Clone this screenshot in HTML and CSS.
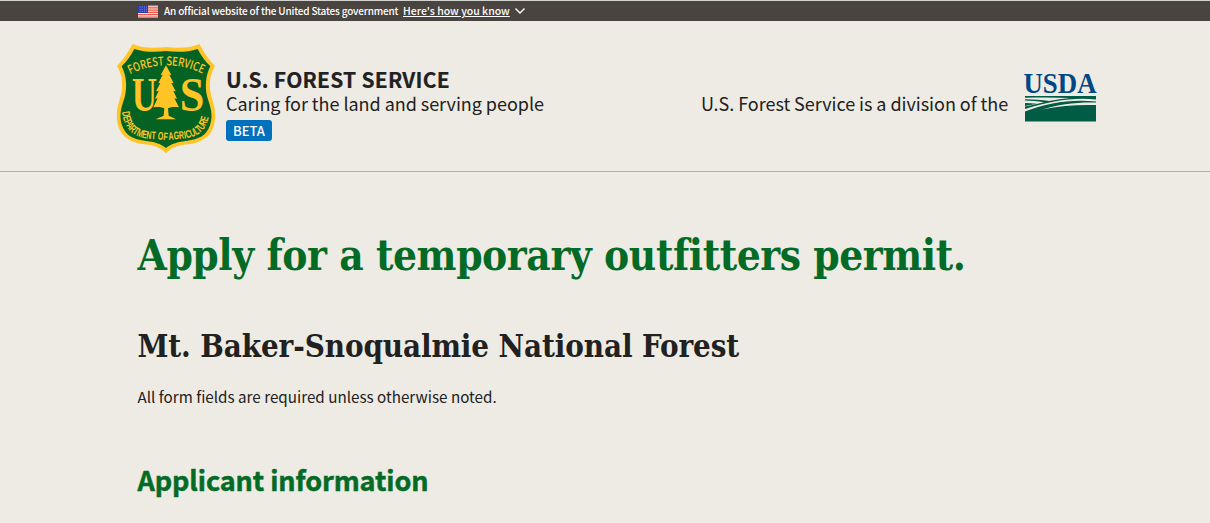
FILE: index.html
```html
<!DOCTYPE html>
<html lang="en">
<head>
<meta charset="utf-8">
<title>Apply for a temporary outfitters permit</title>
<link rel="stylesheet" href="styles.css">
</head>
<body>
<div class="banner">
  <svg class="flag" viewBox="0 0 20 13" aria-hidden="true">
    <rect width="20" height="13" fill="#f8e4df"/>
    <path d="M0 .7H20M0 2.9H20M0 5.1H20M0 7.3H20M0 9.5H20M0 12.2H20" stroke="#e8574a" stroke-width="1.25"/>
    <rect width="10" height="8" fill="#283bb0"/>
    <path d="M1.5 2H9M1.5 4.2H9M1.5 6.2H9" stroke="#a9b4e6" stroke-width=".8" stroke-dasharray="1 1.2"/>
  </svg>
  <span class="banner-text">An official website of the United States government</span>
  <a class="banner-link">Here's how you know</a>
  <svg class="chevron" viewBox="0 0 12 8" aria-hidden="true"><path d="M1.5 1.5L6 6L10.500 1.500" fill="none" stroke="#fff" stroke-width="1.4"/></svg>
</div>
<header class="header">
  <svg class="shield" viewBox="0 0 336 360" role="img" aria-label="Forest Service shield">
    <defs>
      <path id="arc-top" d="M60 109Q168 56 278 107"/>
      <path id="arc-bottom" d="M36 222C42 278 75 299 120 303C150 305 159 306 168 307C177 306 190 305 218 302C264 298 294 278 299 218"/>
    </defs>
    <path fill="#ffc526" d="M68 18C96 31 137 31 168 27C200 31 240 31 268 18C281 43 297 66 315 84C298 112 296 143 304 174C313 205 321 230 311 265C301 299 270 316 233 319C203 322 184 329 168 346C151 329 133 322 103 319C66 316 35 299 25 265C15 230 23 205 32 174C40 143 38 112 21 84C39 66 55 43 68 18Z"/>
    <path fill="#046322" d="M73 33C103 43 137 43 168 39C200 43 234 43 263 33C273 53 286 70 301 85C287 113 284 146 292 178C302 209 310 232 300 262C290 293 264 305 232 308C204 311 184 317 168 330C152 317 132 311 104 308C72 305 46 293 36 262C26 232 34 209 44 178C52 146 49 113 35 85C50 70 63 53 73 33Z"/>
    <path fill="#ffc526" d="M168 82L184 111L178 110L191 136L184 135L197 160L190 159L201 182L193 181L207 208C194 206 183 207 174 211L176 233C184 238 193 239 198 244H137C143 239 153 238 161 233L163 211C153 207 143 206 130 208L143 181L135 182L146 159L138 160L151 135L145 136L158 110L152 111Z"/>
    <g class="shield-letters">
      <text class="shield-us" x="65" y="220" textLength="76" lengthAdjust="spacingAndGlyphs">U</text>
      <text class="shield-us" x="209" y="220" textLength="74" lengthAdjust="spacingAndGlyphs">S</text>
      <text class="shield-top"><textPath href="#arc-top" textLength="226" lengthAdjust="spacingAndGlyphs">FOREST SERVICE</textPath></text>
      <text class="shield-bottom"><textPath href="#arc-bottom" textLength="338" lengthAdjust="spacingAndGlyphs">DEPARTMENT OF AGRICULTURE</textPath></text>
    </g>
  </svg>
  <div class="identity">
    <div class="agency">U.S. FOREST SERVICE</div>
    <div class="tagline">Caring for the land and serving people</div>
    <span class="beta">BETA</span>
  </div>
  <div class="division">U.S. Forest Service is a division of the</div>
  <svg class="usda" viewBox="0 0 74 52" role="img" aria-label="USDA">
    <text class="usda-word" x="-.5" y="22.200" textLength="73" lengthAdjust="spacingAndGlyphs">USDA</text>
    <path fill="#005c45" d="M1 25H72V28.500C50 26 26 30 1 38V35.500C8 34 15 32.500 20 31.200C14 30 7 29.600 1 29.500V28.300C9 28.300 18 29 25 30C32 28.700 39 27.600 46 27C31 26.300 16 26.300 1 26.800Z"/>
    <path fill="#005c45" d="M1 32C5 32 9 32.300 13 32.800L1 35ZM1 40.500C25 31 48 28 72 30.500V31.500C52 31 34 33.500 18 38.500C36 34.500 54 33.500 72 34V50.500H1Z"/>
  </svg>
</header>
<main class="content">
  <h1 class="title">Apply for a temporary outfitters permit.</h1>
  <h2 class="forest">Mt. Baker-Snoqualmie National Forest</h2>
  <p class="note">All form fields are required unless otherwise noted.</p>
  <h3 class="section">Applicant information</h3>
</main>
</body>
</html>
```
FILE: styles.css
```css
* { box-sizing: border-box; }
body {
  margin: 0;
  background: #eeebe4;
  color: #212121;
  font-family: "Noto Sans CJK SC", "Open Sans", sans-serif;
  overflow: hidden;
}
.banner {
  display: flex;
  align-items: center;
  height: 21px;
  padding-left: 138px;
  border-top: 1px solid #d3d3cf;
  background: #494440;
  color: #fff;
  font-size: 10px;
  line-height: 20px;
  font-weight: 500;
  white-space: nowrap;
}
.flag { width: 20px; height: 13px; margin-right: 6px; }
.banner-text { width: 239px; letter-spacing: -.18px; }
.banner-link { width: 107px; font-size: 10.500px; text-decoration: underline; text-underline-offset: 1px; }
.chevron { width: 12px; height: 8px; margin-left: 4px; }
.header {
  display: flex;
  align-items: flex-start;
  height: 151px;
  padding: 17px 0 0 110px;
  border-bottom: 1px solid #aab0ac;
  white-space: nowrap;
}
.shield { width: 112px; height: 120px; flex: none; }
.shield-letters { fill: #ffc526; }
.shield-us { font: bold 148px "Liberation Serif", serif; }
.shield-top { font: 500 36px "Noto Sans CJK SC", sans-serif; }
.shield-bottom { font: bold 33px "Liberation Sans", sans-serif; }
.identity { width: 476px; padding: 29px 0 0 4px; }
.agency { font-size: 21px; line-height: 24px; font-weight: 700; letter-spacing: .24px; -webkit-text-stroke: .2px; }
.tagline { margin-top: -1px; font-size: 18px; line-height: 26px; letter-spacing: -.04px; }
.beta {
  display: block;
  width: 46px;
  height: 21px;
  margin-top: 4px;
  border-radius: 3px;
  background: #0071bc;
  color: #fff;
  font-size: 13px;
  line-height: 21px;
  font-weight: 500;
  text-align: center;
}
.division { width: 326px; padding: 52px 0 0 3px; font-size: 18px; line-height: 26px; letter-spacing: -.04px; }
.usda { width: 74px; height: 52px; margin-top: 33px; flex: none; overflow: visible; }
.usda-word { font: bold 30px "Liberation Serif", serif; fill: #004785; }
.content { padding: 56px 138px 0 137.500px; white-space: nowrap; }
h1, h2, h3, p { margin: 0; }
.title, .forest { font-family: "DejaVu Serif Condensed", "DejaVu Serif", serif; font-weight: 700; }
.title { color: #046b27; font-size: 42px; line-height: 56px; letter-spacing: -.44px; }
.forest { margin-top: 40px; font-size: 31px; line-height: 44px; letter-spacing: -.1px; }
.note { margin-top: 16px; font-size: 15.200px; line-height: 24px; letter-spacing: .01px; }
.section { margin-top: 53px; color: #046b27; font-size: 27px; line-height: 38px; font-weight: 700; letter-spacing: -.08px; -webkit-text-stroke: .5px; }
```
